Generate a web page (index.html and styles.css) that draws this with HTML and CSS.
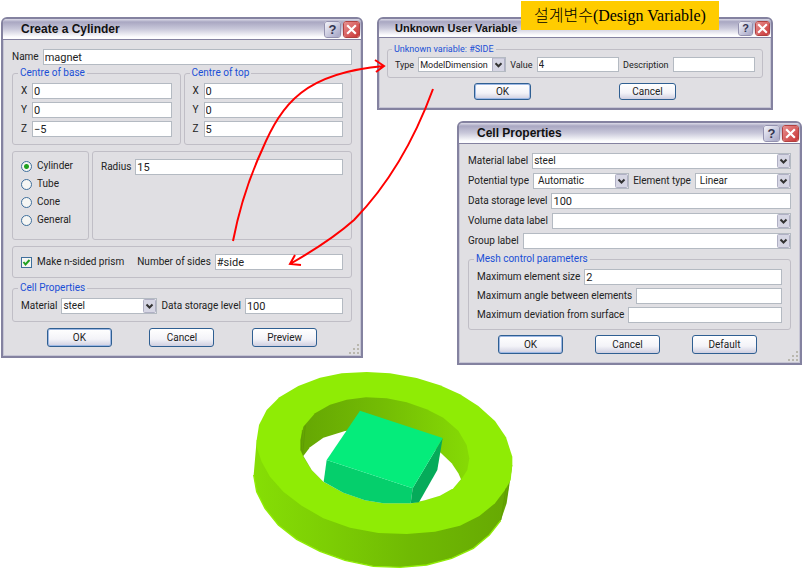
FILE: index.html
```
<!DOCTYPE html>
<html lang="ko">
<head>
    <meta charset="UTF-8">
    <meta name="viewport" content="width=device-width, initial-scale=1.0">
    <title>Design Variable</title>
    <link rel="stylesheet" href="styles.css">
</head>
<body>
    <main class="desktop">
        <svg class="model" viewBox="0 0 870 639" role="img" aria-label="Ring and magnet model">
            <defs>
                <linearGradient id="outerWall" x1="0" x2="1" y1="0" y2="0">
                    <stop offset="0" stop-color="#86de05"/>
                    <stop offset="0.3" stop-color="#7ccd04"/>
                    <stop offset="0.6" stop-color="#70ba03"/>
                    <stop offset="1" stop-color="#66a803"/>
                </linearGradient>
                <linearGradient id="innerWall" x1="0" x2="1" y1="0" y2="0">
                    <stop offset="0" stop-color="#65a603"/>
                    <stop offset="0.5" stop-color="#74bd04"/>
                    <stop offset="1" stop-color="#86da05"/>
                </linearGradient>
            </defs>
            <!-- outer wall -->
            <path fill="url(#outerWall)" d="M50 240L41 345L50 395L75 445L115 495L170 538L240 574L315 601L400 619L480 622L560 615L635 595L700 565L748 525L782 482L800 430L817 315L500 300Z"/>
            <!-- top face -->
            <path fill="#8fec05" d="M50 240L57 195L80 150L118 112L175 78L240 53L305 40L380 36L450 40L530 54L600 76L660 103L715 138L765 183L798 232L817 290L817 315L812 360L795 390L765 430L718 468L660 497L585 515L500 522L415 519L330 503L250 475L185 437L130 395L90 350L65 305L50 262Z"/>
            <path fill="none" stroke="#8fec05" stroke-width="4" d="M41 345L50 395L75 445L115 495L170 538L240 574L315 601L400 619L480 622L560 615L635 595L700 565L748 525L782 482"/>
            <!-- inner wall and opening -->
            <path fill="url(#innerWall)" d="M181 240L190 200L225 160L270 134L320 119L378 112L440 115L500 127L560 148L610 173L655 212L680 255L688 295L682 330L663 360L640 385L600 407L555 421L515 430L430 430L375 421L310 398L250 365L215 330L190 290L181 270Z"/>
            <path fill="none" stroke="#5a9503" stroke-width="2" d="M196 196L188 280M187 210L184 272M798 385L783 480M806 375L795 435"/>
            <path fill="#fff" d="M190 288L210 262L250 233L315 213L400 205L500 222L602 278L635 310L655 340L663 358L640 385L600 407L555 421L515 430L430 430L375 421L310 398L250 365L215 330Z"/>
            <!-- magnet -->
            <path fill="#05cf6c" d="M260 300L518 385L512 430L430 430L375 421L310 398L251 365Z"/>
            <path fill="#05ab5a" d="M518 385L608 234L592 330L537 427L512 430Z"/>
            <path fill="#05ec7b" d="M360 152L608 234L518 385L260 300Z"/>
        </svg>

        <form class="window cylinder">
            <header class="titlebar">
                <h2>Create a Cylinder</h2>
                <button type="button" class="caption help" aria-label="Help">?</button>
                <button type="button" class="caption close" aria-label="Close"><svg viewBox="0 0 12 12"><path d="M2 2L10 10M10 2L2 10"/></svg></button>
            </header>
            <div class="client">
                <div class="row"><label for="name">Name</label><input id="name" type="text" value="magnet"></div>
                <div class="columns">
                    <fieldset>
                        <legend>Centre of base</legend>
                        <div class="row axis"><label for="bx">X</label><input id="bx" type="text" value="0"></div>
                        <div class="row axis"><label for="by">Y</label><input id="by" type="text" value="0"></div>
                        <div class="row axis"><label for="bz">Z</label><input id="bz" type="text" value="−5"></div>
                    </fieldset>
                    <fieldset>
                        <legend>Centre of top</legend>
                        <div class="row axis"><label for="tx">X</label><input id="tx" type="text" value="0"></div>
                        <div class="row axis"><label for="ty">Y</label><input id="ty" type="text" value="0"></div>
                        <div class="row axis"><label for="tz">Z</label><input id="tz" type="text" value="5"></div>
                    </fieldset>
                </div>
                <div class="columns shapes">
                    <div class="group shape-list">
                        <label><input type="radio" name="shape" checked>Cylinder</label>
                        <label><input type="radio" name="shape">Tube</label>
                        <label><input type="radio" name="shape">Cone</label>
                        <label><input type="radio" name="shape">General</label>
                    </div>
                    <div class="group shape-size">
                        <div class="row"><label for="radius">Radius</label><input id="radius" type="text" value="15"></div>
                    </div>
                </div>
                <div class="group row prism">
                    <label class="check"><input type="checkbox" checked>Make n-sided prism</label>
                    <label for="sides">Number of sides</label><input id="sides" type="text" value="#side">
                </div>
                <fieldset>
                    <legend>Cell Properties</legend>
                    <div class="row">
                        <label for="material">Material</label>
                        <select id="material" class="material"><option>steel</option></select>
                        <label for="level">Data storage level</label>
                        <input id="level" type="text" value="100">
                    </div>
                </fieldset>
                <div class="buttons">
                    <button type="button" class="default">OK</button>
                    <button type="button">Cancel</button>
                    <button type="button">Preview</button>
                </div>
            </div>
            <svg class="grip" viewBox="0 0 12 12"><path d="M9 1h2v2h-2zM9 5h2v2h-2zM9 9h2v2h-2zM5 5h2v2h-2zM5 9h2v2h-2zM1 9h2v2h-2z"/></svg>
        </form>

        <form class="window compact variable">
            <header class="titlebar">
                <h2>Unknown User Variable</h2>
                <button type="button" class="caption help" aria-label="Help">?</button>
                <button type="button" class="caption close" aria-label="Close"><svg viewBox="0 0 12 12"><path d="M2 2L10 10M10 2L2 10"/></svg></button>
            </header>
            <div class="client">
                <fieldset>
                    <legend>Unknown variable: #SIDE</legend>
                    <div class="row">
                        <label for="type">Type</label>
                        <select id="type" class="type"><option>ModelDimension</option></select>
                        <label for="value">Value</label>
                        <input id="value" type="text" value="4">
                        <label for="description">Description</label>
                        <input id="description" type="text">
                    </div>
                </fieldset>
                <div class="buttons">
                    <button type="button" class="default">OK</button>
                    <button type="button">Cancel</button>
                </div>
            </div>
        </form>

        <form class="window cell">
            <header class="titlebar">
                <h2>Cell Properties</h2>
                <button type="button" class="caption help" aria-label="Help">?</button>
                <button type="button" class="caption close" aria-label="Close"><svg viewBox="0 0 12 12"><path d="M2 2L10 10M10 2L2 10"/></svg></button>
            </header>
            <div class="client">
                <div class="stack">
                    <div class="row"><label for="mlabel">Material label</label><select id="mlabel"><option>steel</option></select></div>
                    <div class="row">
                        <label for="potential">Potential type</label>
                        <select id="potential" class="spaced"><option>Automatic</option></select>
                        <label for="element">Element type</label>
                        <select id="element" class="spaced"><option>Linear</option></select>
                    </div>
                    <div class="row"><label for="dlevel">Data storage level</label><input id="dlevel" type="text" value="100"></div>
                    <div class="row"><label for="volume">Volume data label</label><select id="volume"><option></option></select></div>
                    <div class="row"><label for="group">Group label</label><select id="group"><option></option></select></div>
                </div>
                <fieldset>
                    <legend>Mesh control parameters</legend>
                    <div class="row"><label for="size">Maximum element size</label><input id="size" type="text" value="2"></div>
                    <div class="row"><label for="angle">Maximum angle between elements</label><input id="angle" type="text"></div>
                    <div class="row"><label for="deviation">Maximum deviation from surface</label><input id="deviation" type="text"></div>
                </fieldset>
                <div class="buttons">
                    <button type="button" class="default">OK</button>
                    <button type="button">Cancel</button>
                    <button type="button">Default</button>
                </div>
            </div>
            <svg class="grip" viewBox="0 0 12 12"><path d="M9 1h2v2h-2zM9 5h2v2h-2zM9 9h2v2h-2zM5 5h2v2h-2zM5 9h2v2h-2zM1 9h2v2h-2z"/></svg>
        </form>

        <p class="note">설계변수(Design Variable)</p>

        <svg class="arrows" width="803" height="573" viewBox="0 0 803 573" aria-hidden="true">
            <path d="M233 241C240 205 250 176 262 150C282 103 305 73 384 66M375 60L384 66L376 72"/>
            <path d="M433 89C418 130 393 180 354 220C336 236 318 248 290 264M295 255L290 264L301 265"/>
        </svg>
    </main>
</body>
</html>
```
FILE: styles.css
```
* {
    box-sizing: border-box;
}
body {
    margin: 0;
    background-color: #fff;
    color: #222;
    font-family: Roboto, "Liberation Sans", sans-serif;
    font-size: 10px;
    line-height: 14px;
}
.desktop {
    position: relative;
    min-height: 100vh;
    overflow: hidden;
}
.window {
    position: absolute;
    border: 2px solid #8482a0;
    border-radius: 6px 6px 0 0;
    background-color: #e0dfe3;
}
.cylinder {
    left: 1px;
    top: 17px;
    width: 362px;
}
.variable {
    left: 377px;
    top: 17px;
    width: 396px;
}
.cell {
    left: 457px;
    top: 121px;
    width: 345px;
}
.titlebar {
    display: flex;
    align-items: center;
    gap: 2px;
    height: 21px;
    padding: 0 1px 0 18px;
    border-bottom: 1px solid #8482a0;
    border-radius: 4px 4px 0 0;
    background: linear-gradient(#dcdbe8, #a9a7c2 15%, #c9c8da 50%, #fdfdfe 90%);
}
.titlebar h2 {
    flex: 1;
    margin: 0;
    color: #111;
    font-family: "Liberation Sans", Arial, sans-serif;
    font-size: 12px;
}
.caption {
    display: flex;
    align-items: center;
    justify-content: center;
    width: 17px;
    height: 17px;
    padding: 0;
    border: 1px solid #fff;
    border-radius: 3px;
    font: bold 13px "Liberation Sans", Arial, sans-serif;
}
.help {
    background: linear-gradient(135deg, #f4f4fa, #a3a3c4);
    outline: 1px solid #9492b0;
    outline-offset: -1px;
    color: #333350;
}
.close {
    background: linear-gradient(135deg, #e89090, #c83434);
    outline: 1px solid #b04040;
    outline-offset: -1px;
}
.close svg {
    width: 13px;
    height: 13px;
    fill: none;
    stroke: #fff;
    stroke-width: 2;
}
.client {
    padding: 9px 8px 8px 8px;
    border: 1px solid #c6c5d4;
    border-top: 0;
}
.row {
    display: flex;
    align-items: center;
    gap: 4px;
}
.row + .row {
    margin-top: 3px;
}
label {
    white-space: nowrap;
}
input[type="text"],
select {
    flex: 1;
    min-width: 0;
    height: 16px;
    margin: 0;
    padding: 0 1px;
    border: 1px solid #b4bac2;
    border-radius: 0;
    background-color: #fff;
    color: #222;
    font: inherit;
}
input[type="text"] {
    font-size: 11px;
}
select {
    appearance: none;
    background-image: url("data:image/svg+xml,%3Csvg xmlns='http://www.w3.org/2000/svg' viewBox='0 0 13 14'%3E%3Crect x='.5' y='.5' width='12' height='13' rx='1' fill='%23d6d6e4' stroke='%23b0b0c4'/%3E%3Cpath d='M3.5 5.5L6.5 8.5L9.5 5.5' fill='none' stroke='%23333' stroke-width='2'/%3E%3C/svg%3E");
    background-position: right center;
    background-repeat: no-repeat;
    background-size: 13px 14px;
}
.spaced {
    padding-left: 4px;
}
.columns {
    display: flex;
    gap: 3px;
}
.columns fieldset {
    flex: 1;
}
fieldset {
    min-width: 0;
    margin: 1px 0 0;
    padding: 3px 8px 7px;
    border: 1px solid #c0bec6;
    border-radius: 3px;
}
legend {
    margin-left: -3px;
    padding: 0 2px;
    color: #1a4fd6;
}
.axis label {
    width: 7px;
}
.group {
    border: 1px solid #c0bec6;
    border-radius: 3px;
    padding: 7px 8px;
}
.shapes {
    margin: 6px 0;
}
.shape-list {
    display: flex;
    flex-direction: column;
    gap: 4px;
    width: 77px;
    padding-bottom: 12px;
}
.shape-list label,
.check {
    display: flex;
    align-items: center;
    gap: 5px;
}
.check {
    margin-right: 9px;
}
.shape-size {
    flex: 1;
}
input[type="radio"],
input[type="checkbox"] {
    appearance: none;
    width: 11px;
    height: 11px;
    margin: 0;
    border: 1px solid #3f6f9c;
    background-color: #f6f6f4;
}
input[type="radio"] {
    border-radius: 50%;
}
input[type="radio"]:checked {
    background-image: radial-gradient(circle, #21a121 2px, transparent 3px);
}
input[type="checkbox"]:checked {
    background-image: url("data:image/svg+xml,%3Csvg xmlns='http://www.w3.org/2000/svg' viewBox='0 0 9 9'%3E%3Cpath d='M1.5 4L3.5 6.5L7.5 2' fill='none' stroke='%2321a121' stroke-width='2'/%3E%3C/svg%3E");
}
.cylinder .prism + fieldset {
    margin-top: 3px;
}
.cylinder .material {
    flex: 0 0 96px;
}
.buttons {
    display: flex;
    justify-content: space-around;
    margin-top: 6px;
    padding: 0 16px;
}
.buttons button {
    width: 65px;
    height: 19px;
    padding: 0;
    border: 1px solid #2f5f92;
    border-radius: 3px;
    background: linear-gradient(#fff, #f3f3f8 60%, #cfcfe0);
    color: #222;
    font: inherit;
}
.buttons .default {
    box-shadow: inset 0 0 0 1px #9db8e4;
}
.grip {
    position: absolute;
    right: 1px;
    bottom: 1px;
    width: 12px;
    height: 12px;
    fill: #b9b7ae;
}
.stack .row + .row {
    margin-top: 4px;
}
.stack + fieldset {
    margin-top: 3px;
    padding-bottom: 6px;
}
.cell .buttons {
    margin-top: 5px;
    padding: 0 18px 0 14px;
}
.compact {
    font-size: 9px;
    line-height: 12px;
}
.compact .titlebar {
    height: 19px;
    padding-left: 16px;
}
.compact .titlebar h2 {
    font-size: 11px;
}
.compact .caption {
    width: 15px;
    height: 15px;
    font-size: 11px;
}
.compact .client {
    padding: 4px 7px 7px;
}
.compact fieldset {
    padding: 2px 7px 5px;
}
.compact input[type="text"],
.compact select {
    height: 15px;
}
.compact input[type="text"] {
    font-size: 10px;
}
.compact .type {
    flex: 0 0 88px;
}
.compact .buttons {
    justify-content: center;
    gap: 88px;
    margin-top: 5px;
}
.compact .buttons button {
    width: 57px;
    height: 17px;
    font-size: 10px;
}
.note {
    position: absolute;
    left: 521px;
    top: 1px;
    margin: 0;
    padding: 3px 13px;
    background-color: #fc0;
    color: #000;
    font: 300 16px/23px "Liberation Serif", "Noto Sans CJK KR", serif;
    white-space: nowrap;
}
.model {
    position: absolute;
    left: 240px;
    top: 360px;
    width: 290px;
    z-index: -1;
}
.arrows {
    position: absolute;
    left: 0;
    top: 0;
    fill: none;
    stroke: #f00;
    stroke-width: 2;
    pointer-events: none;
}
```
